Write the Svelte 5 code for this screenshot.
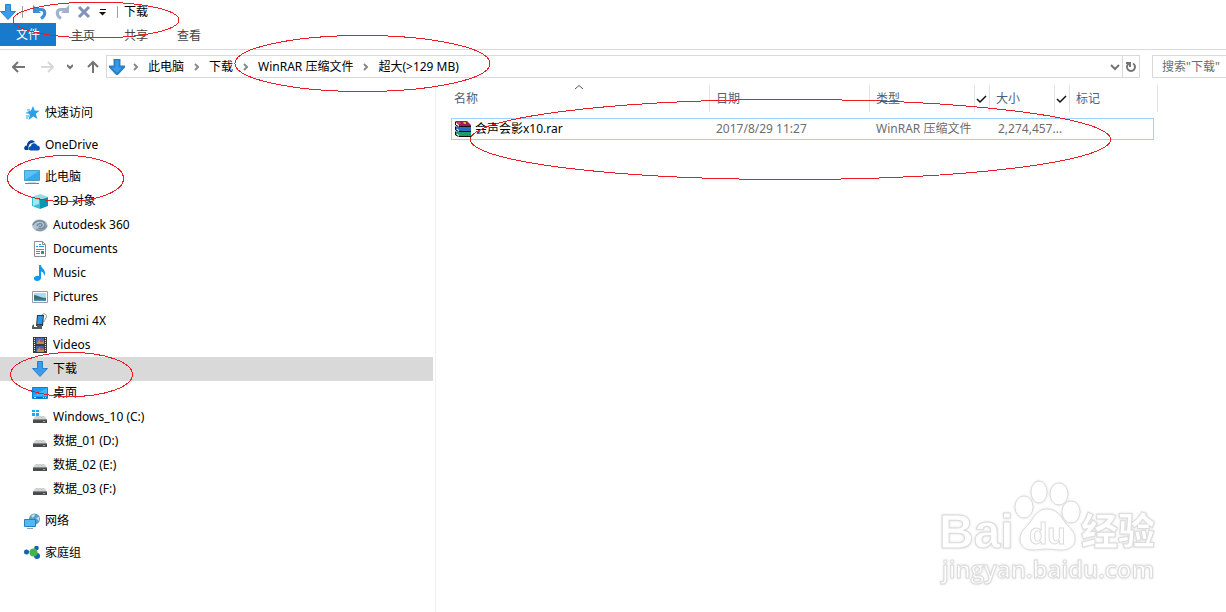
<script>
    let path = ["此电脑", "下载", "WinRAR 压缩文件", "超大(>129 MB)"];
    let tabs = ["主页", "共享", "查看"];
    let search = $state("");
    let selected = $state("下载");

    // tree on the left, one group per root
    let groups = [
        { name: "快速访问", icon: "star", children: [] },
        { name: "OneDrive", icon: "cloud", children: [] },
        {
            name: "此电脑",
            icon: "pc",
            children: [
                { name: "3D 对象", icon: "cube" },
                { name: "Autodesk 360", icon: "autodesk" },
                { name: "Documents", icon: "doc" },
                { name: "Music", icon: "music" },
                { name: "Pictures", icon: "picture" },
                { name: "Redmi 4X", icon: "phone" },
                { name: "Videos", icon: "video" },
                { name: "下载", icon: "down" },
                { name: "桌面", icon: "desktop" },
                { name: "Windows_10 (C:)", icon: "windisk" },
                { name: "数据_01 (D:)", icon: "disk" },
                { name: "数据_02 (E:)", icon: "disk" },
                { name: "数据_03 (F:)", icon: "disk" },
            ],
        },
        { name: "网络", icon: "network", children: [] },
        { name: "家庭组", icon: "homegroup", children: [] },
    ];

    let columns = [
        { name: "名称", check: false },
        { name: "日期", check: false },
        { name: "类型", check: true },
        { name: "大小", check: true },
        { name: "标记", check: false },
    ];

    let files = [
        {
            name: "会声会影x10.rar",
            date: "2017/8/29 11:27",
            type: "WinRAR 压缩文件",
            size: "2,274,457...",
        },
    ];
</script>

{#snippet icon(name)}
    <svg class="icon" viewBox="0 0 16 16" aria-hidden="true">
        {#if name === "star"}
            <path d="M9 1l1.700 4.500 4.800.2-3.700 3 1.700 5.300-4.300-2.500L4.500 15l1.300-5L3 7l4-1.500z" fill="#2ba0e6" />
            <path d="M3 5h3M2 8h2M2 11h3M2 13h2" stroke="#2ba0e6" />
        {:else if name === "cloud"}
            <path d="M1 13C-1 11 1 8 3 8.500 3 4 8 1.500 11 5L8 6C5 6.500 4 9 4.500 13z" fill="#0b3f9c" />
            <path d="M6 13.500C3.500 12 5 9 7 9.300 7 5.500 12 5 13 8.600c3-.2 4 3.500 1.500 4.900z" fill="#0d4fb5" />
        {:else if name === "pc"}
            <path d="M.5 1.500h15v10H.5z" fill="#5cc0fb" stroke="#4b9cca" />
            <path d="M1 11l14-9v9z" fill="#38a8f2" />
            <path d="M1 14.500h14" stroke="#6f8399" />
            <path d="M4 13.500h8" stroke="#d5dce3" />
        {:else if name === "cube"}
            <path d="M0 4l8-3 8 3-8 3z" fill="#86e2ea" />
            <path d="M0 4l8 3v9l-8-3z" fill="#37c0d5" />
            <path d="M8 7l8-3v9l-8 3z" fill="#0d94b0" />
            <path d="M1 5l6 2v4l-6 2z" fill="#9aeaf0" />
        {:else if name === "autodesk"}
            <path d="M0 8C1 3 7 1 12 3.500c3 1 4 4 3.500 6-1 4-6 6-11 4.500C2 13 0 10.500 0 8z" fill="#b4c5cf" />
            <path d="M1 8c2-5 10-6 12-1 1 4-4 6-7 4M5 9c1-3 5-3 5-1s-2 2-3 1" fill="none" stroke="#6f8a9b" stroke-width="1.500" />
            <path d="M4 12.500c5 2 9 0 11-4" fill="none" stroke="#8199a8" stroke-width="1.500" />
        {:else if name === "doc"}
            <path d="M2.500.5h8l3 3v12h-11z" fill="#fff" stroke="#8b8f93" />
            <path d="M10.500.5v3h3" fill="none" stroke="#8b8f93" />
            <path d="M4 5.500h2M7 3.500h2M7 5.500h5M4 8.500h8M4 10.500h4M4 12.500h4" stroke="#2b9be0" />
            <path d="M9 10h3v3H9z" fill="#3f8a8a" />
        {:else if name === "music"}
            <path d="M7 0h2c0 3 4 4 4 8 0 1.500-.5 2.500-1 3 0-3-1-4-3-4.500V13c0 2-2 3-4 3-3 0-4-3-2-4.500C4.500 10.600 6 10.500 7 11z" fill="#1199f0" />
        {:else if name === "picture"}
            <path d="M.5 2.500h15v11H.5z" fill="#fff" stroke="#989ca0" />
            <path d="M2 4h12v8H2z" fill="#a8dcf5" />
            <path d="M2 6c4 0 6 3 12 3v3H2z" fill="#3c6e6e" />
            <path d="M2 10.500h12V12H2z" fill="#4b91c8" />
        {:else if name === "phone"}
            <path d="M9 3c2-4 7-2 5 2-1 2-2 2-2 4" fill="none" stroke="#8d9296" />
            <path d="M5 2h7l-1 11H4z" fill="#32383d" />
            <path d="M6 3h5l-1 8H5z" fill="#2c97ea" />
            <path d="M0 13l2-2v3h3v-2h5v4H0z" fill="#565b5f" />
        {:else if name === "video"}
            <path d="M1 0h14v16H1z" fill="#3a3a3e" />
            <path d="M2.500 1v14M13.500 1v14" stroke="#eee" stroke-dasharray="1 1" />
            <path d="M4 1h8v6H4z" fill="#446fc0" />
            <path d="M4 9h8v6H4z" fill="#3763b2" />
            <path d="M5 5l3-3 1 3 3-1v3H5zM5 13l3-3 1 3 3-1v3H5z" fill="#c68a40" />
            <path d="M8 3h3v2H8zM8 11h3v2H8z" fill="#b05070" />
        {:else if name === "down"}
            <path d="M5.500.5h5v7h5L8 15.500.5 7.500h5z" fill="#3c9be9" stroke="#2481cc" />
        {:else if name === "desktop"}
            <path d="M.5 2.500h15v11H.5z" fill="#18a0f5" stroke="#0d7fcf" />
            <path d="M1 11l14-8v8z" fill="#42b6fb" />
            <path d="M1 12.500h14" stroke="#0a64ab" />
            <path d="M2 12.500h2M11 12.500h1M13 12.500h1" stroke="#cfeaff" />
        {:else if name === "windisk" || name === "disk"}
            {#if name === "windisk"}
                <path d="M0 1h3v2H0zM4 1h3v2H4zM0 4h3v3H0zM4 4h3v3H4z" fill="#12aef0" />
            {/if}
            <path d="M3.500 7h9L15 10.500H1z" fill="#cfd2d5" />
            <path d="M1 10h14v4H1z" fill="#4a4d50" />
            <path d="M1 10h14v1H1z" fill="#8b8e91" />
            <path d="M11 12h2v1h-2z" fill="#47e05a" />
        {:else if name === "network"}
            <circle cx="10.500" cy="6" r="5.500" fill="#5a9ec6" />
            <path d="M7 3c2-2 4-2 4-1s-2 2-2 3M12 5l3-1v4z" fill="#c3e2ee" />
            <path d="M.5 6.500h11v7H.5z" fill="#4fbaf9" stroke="#2c80b8" />
            <path d="M3 15.500h6" stroke="#8ca0b3" />
        {:else if name === "homegroup"}
            <path d="M3 7l6-1 3-3M9 7l4 5" fill="none" stroke="#9fc6dc" />
            <circle cx="2.500" cy="7" r="2.500" fill="#1561ae" />
            <circle cx="12.500" cy="3" r="2.300" fill="#1561ae" />
            <circle cx="13" cy="11" r="3" fill="#1561ae" />
            <circle cx="9.500" cy="7.500" r="4" fill="#3fb54a" />
        {:else if name === "rar"}
            <path d="M0 0h12l4 4v1H4z" fill="#a01860" />
            <path d="M2 1h3l1 2H3z" fill="#d8405a" />
            <path d="M8 1h3v2H9z" fill="#e3b040" />
            <path d="M0 5l4 1h12v4H4L0 8z" fill="#2a6cc0" />
            <path d="M0 10l4 1h12v4H4l-4-2z" fill="#1f9a68" />
            <path d="M4 5.500h12M4 10.500h12M4 15.500h12M.5 1v3l3 1.500M.5 6v3l3 1.500M.5 11v3l3 1.500" fill="none" stroke="#111" />
            <path d="M2 3l2 1.500M2 8l2 1.500M2 13l2 1.500" stroke="#f4f0e0" />
        {/if}
    </svg>
{/snippet}

{#snippet chevron()}
    <svg class="chevron" viewBox="0 0 5 8" aria-hidden="true">
        <path d="M1 1l3 3-3 3" />
    </svg>
{/snippet}

<div class="explorer">
    <header class="titlebar">
        {@render icon("down")}
        <span class="separator"></span>
        <button aria-label="撤消">
            <svg class="icon" viewBox="0 0 16 16">
                <path d="M4 5.500h5c5 0 5 6 0 9" fill="none" stroke="#3a8fd8" stroke-width="3" />
                <path d="M1 1v8h8z" fill="#3a8fd8" />
            </svg>
        </button>
        <button aria-label="恢复">
            <svg class="icon" viewBox="0 0 16 16">
                <path d="M12 5.500H7c-5 0-5 6 0 9" fill="none" stroke="#a3b2cc" stroke-width="3" />
                <path d="M15 1v8H7z" fill="#a3b2cc" />
            </svg>
        </button>
        <button aria-label="删除">
            <svg class="icon" viewBox="0 0 16 16">
                <path d="M3 3l10 10M13 3L3 13" stroke="#7f92b8" stroke-width="3" />
            </svg>
        </button>
        <button class="narrow" aria-label="自定义快速访问工具栏">
            <svg viewBox="0 0 8 8" width="8" height="8">
                <path d="M1 1.500h6" stroke="#111" />
                <path d="M0 4h7L3.500 7.500z" fill="#111" />
            </svg>
        </button>
        <span class="separator"></span>
        <span class="title">下载</span>
    </header>

    <div class="ribbon">
        <button class="file">文件</button>
        {#each tabs as tab}
            <button class="tab">{tab}</button>
        {/each}
    </div>

    <div class="navbar">
        <div class="arrows">
            <button aria-label="后退">
                <svg viewBox="0 0 14 12" width="14" height="12">
                    <path d="M13 6H2M6 1L1 6l5 5" />
                </svg>
            </button>
            <button class="off" aria-label="前进">
                <svg viewBox="0 0 14 12" width="14" height="12">
                    <path d="M1 6h11M8 1l5 5-5 5" />
                </svg>
            </button>
            <button aria-label="最近浏览的位置">
                <svg viewBox="0 0 6 6" width="6" height="6">
                    <path d="M0 1l3 3 3-3" />
                </svg>
            </button>
            <button aria-label="向上">
                <svg viewBox="0 0 12 14" width="12" height="14">
                    <path d="M6 13V2M1 7l5-5 5 5" />
                </svg>
            </button>
        </div>
        <div class="address">
            {@render icon("down")}
            {#each path as part}
                {@render chevron()}
                <a href="#path">{part}</a>
            {/each}
            <button class="drop" aria-label="以前的位置">
                <svg viewBox="0 0 10 8" width="10" height="8">
                    <path d="M1 2l4 4 4-4" />
                </svg>
            </button>
            <button class="refresh" aria-label="刷新">
                <svg viewBox="0 0 12 12" width="12" height="12">
                    <path d="M8 2.500a4 4 0 1 1-4 0M1 2h4v4" />
                </svg>
            </button>
        </div>
        <input class="search" bind:value={search} placeholder={'搜索"下载"'} aria-label="搜索" />
    </div>

    <div class="content">
        <nav class="tree">
            {#each groups as group}
                <div class="group">
                    <a href="#tree" class="root">{@render icon(group.icon)}{group.name}</a>
                    {#each group.children as child}
                        <a
                            href="#tree"
                            class="child"
                            class:selected={child.name === selected}
                            onclick={() => (selected = child.name)}
                        >
                            {@render icon(child.icon)}{child.name}
                        </a>
                    {/each}
                </div>
            {/each}
        </nav>

        <main class="list">
            <table>
                <thead>
                    <tr>
                        {#each columns as column, i}
                            <th>
                                {column.name}
                                {#if i === 0}
                                    <svg class="sort" viewBox="0 0 8 5" aria-hidden="true">
                                        <path d="M0 4l4-3.500L8 4" />
                                    </svg>
                                {/if}
                                {#if column.check}
                                    <span class="check">
                                        <svg viewBox="0 0 12 10" width="12" height="10">
                                            <path d="M1 5l3 3 6-6" />
                                        </svg>
                                    </span>
                                {/if}
                            </th>
                        {/each}
                    </tr>
                </thead>
                <tbody>
                    {#each files as file}
                        <tr>
                            <td class="name">{@render icon("rar")}{file.name}</td>
                            <td>{file.date}</td>
                            <td>{file.type}</td>
                            <td class="size">{file.size}</td>
                            <td></td>
                        </tr>
                    {/each}
                </tbody>
            </table>
        </main>
    </div>

    <!-- red pen marks -->
    <svg class="marks" aria-hidden="true">
        <ellipse cx="96" cy="20" rx="83" ry="18" />
        <ellipse cx="362.500" cy="63.500" rx="127.500" ry="28" />
        <ellipse cx="65.500" cy="178.500" rx="58" ry="23" />
        <ellipse cx="71.500" cy="374.500" rx="61" ry="22" />
        <ellipse cx="790.500" cy="139.500" rx="320" ry="40" />
    </svg>

    <svg class="watermark" viewBox="0 0 240 130">
        <text class="bai" x="9" y="78">Bai</text>
        <ellipse cx="94" cy="37" rx="9" ry="11" />
        <ellipse cx="109" cy="22" rx="8" ry="11" />
        <ellipse cx="129" cy="24" rx="9" ry="11" />
        <ellipse cx="141" cy="42" rx="9" ry="11" />
        <path d="M117 39c9 0 13 6 17 12s11 10 11 18-7 11-14 11c-6 0-8-1-14-1s-9 1-14 1c-8 0-13-4-13-11 0-8 7-12 11-18s8-12 16-12z" />
        <text class="du" x="99" y="74">du</text>
        <text class="cn" x="151" y="75">经验</text>
        <text class="url" x="12" y="108">jingyan.baidu.com</text>
    </svg>
</div>

<style>
    :global(body) {
        margin: 0;
        background: #fff;
    }
    .explorer {
        position: relative;
        display: flex;
        flex-direction: column;
        min-height: 100vh;
        overflow: hidden;
        font-family: "Noto Sans", "Noto Sans CJK SC", sans-serif;
        font-size: 12px;
        line-height: 16px;
        color: #000;
    }
    button {
        display: flex;
        align-items: center;
        justify-content: center;
        margin: 0;
        padding: 0;
        border: 0;
        background: none;
        font: inherit;
        color: inherit;
    }
    a {
        color: inherit;
        text-decoration: none;
    }
    .icon {
        flex: none;
        width: 16px;
        height: 16px;
    }

    .titlebar {
        display: flex;
        align-items: center;
        height: 23px;
    }
    .titlebar button {
        width: 22px;
    }
    .titlebar .narrow {
        width: 16px;
    }
    .separator {
        width: 1px;
        height: 12px;
        margin: 0 6px;
        background: #a0a0a0;
    }

    .ribbon {
        display: flex;
        gap: 1px;
        height: 26px;
        border-bottom: 1px solid #dadbdc;
        color: #444;
    }
    .ribbon button {
        width: 52px;
        height: 23px;
    }
    .ribbon .tab {
        height: 25px;
    }
    .ribbon .file {
        width: 56px;
        background: #1979ca;
        color: #fff;
    }

    .navbar {
        display: flex;
        align-items: center;
        height: 33px;
    }
    .navbar svg {
        fill: none;
        stroke: #747474;
        stroke-width: 2;
    }
    .arrows {
        display: flex;
        justify-content: space-between;
        width: 87px;
        margin: 0 7px 0 12px;
    }
    .arrows .off svg {
        stroke: #d8d8d8;
    }
    .address {
        display: flex;
        flex: 1;
        align-items: center;
        gap: 10px;
        height: 21px;
        padding-left: 2px;
        border: 1px solid #d9d9d9;
    }
    .address .icon {
        margin-right: -2px;
        stroke: none;
    }
    .navbar .chevron {
        width: 5px;
        height: 8px;
        stroke: #8a8a8a;
    }
    .drop {
        margin-left: auto;
        margin-right: -8px;
    }
    .refresh {
        width: 17px;
        height: 21px;
        border-left: 1px solid #d9d9d9;
    }
    .search {
        box-sizing: border-box;
        width: 74px;
        height: 23px;
        margin-left: 12px;
        padding: 0 0 0 9px;
        border: 1px solid #d9d9d9;
        border-right: 0;
        outline: none;
        font: inherit;
    }
    .search::placeholder {
        color: #6d6d6d;
        opacity: 1;
    }

    .content {
        display: flex;
        flex: 1;
    }
    .tree {
        display: flex;
        flex: none;
        flex-direction: column;
        gap: 8px;
        width: 433px;
        padding: 18px 2px 0 0;
        border-right: 1px solid #f0f0f0;
    }
    .tree a {
        display: flex;
        align-items: center;
        gap: 5px;
        height: 24px;
    }
    .tree .root {
        padding-left: 24px;
    }
    .tree .child {
        padding-left: 32px;
    }
    .tree .selected {
        background: #d9d9d9;
    }

    .list {
        flex: 1;
        padding: 2px 0 0 15px;
    }
    table,
    thead,
    tbody {
        display: block;
    }
    tr {
        display: grid;
        grid-template-columns: 259px 160px 120px 80px 88px;
        width: 707px;
    }
    th {
        position: relative;
        display: flex;
        align-items: center;
        height: 27px;
        padding: 0 0 0 6px;
        border-right: 1px solid #e2e2e2;
        font-weight: normal;
        color: #4c607a;
    }
    th:first-child {
        padding-left: 3px;
    }
    .sort {
        position: absolute;
        top: 0;
        left: 48%;
        width: 8px;
        height: 5px;
        fill: none;
        stroke: #555;
    }
    .check {
        display: flex;
        align-items: center;
        justify-content: center;
        width: 14px;
        height: 27px;
        margin-left: auto;
        border-left: 1px solid #e2e2e2;
    }
    .check path {
        fill: none;
        stroke: #111;
        stroke-width: 1.5;
    }
    tbody tr {
        box-sizing: border-box;
        width: 703px;
        height: 22px;
        margin-top: 6px;
        border: 1px solid #99d1ff;
    }
    td {
        display: flex;
        align-items: center;
        padding: 0 0 0 5px;
        white-space: nowrap;
        color: #6d6d6d;
    }
    .name {
        gap: 4px;
        padding-left: 3px;
        color: #000;
    }
    td.size {
        padding-left: 7px;
    }

    .marks {
        position: absolute;
        inset: 0;
        width: 100%;
        height: 100%;
        pointer-events: none;
        fill: none;
        stroke: #ed1c24;
        shape-rendering: crispEdges;
    }
    .watermark {
        position: absolute;
        right: 56px;
        bottom: 12px;
        width: 240px;
        height: 130px;
        pointer-events: none;
        fill: #fff;
        stroke: #dcdcdc;
        stroke-width: 1;
        filter: drop-shadow(0 0 1px #ddd);
    }
    .bai {
        font: bold 48px "Liberation Sans", sans-serif;
    }
    .du {
        font: bold 30px "Liberation Sans", sans-serif;
    }
    .cn {
        font: 900 37px "Noto Sans CJK SC", sans-serif;
    }
    .url {
        font: 600 24px "Open Sans", sans-serif;
    }
</style>
